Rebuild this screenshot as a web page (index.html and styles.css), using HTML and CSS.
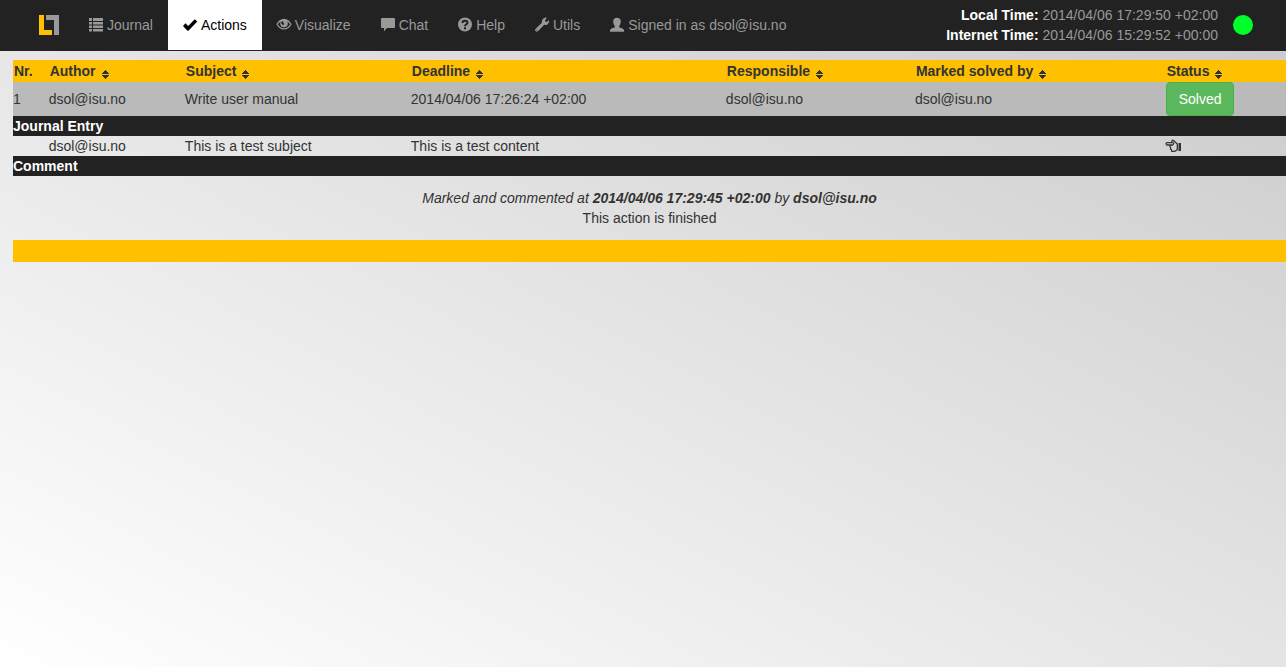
FILE: index.html
```html
<!DOCTYPE html>
<html lang="en">
<head>
<meta charset="utf-8">
<title>Actions</title>
<link rel="stylesheet" href="styles.css">
</head>
<body>
<svg class="defs" aria-hidden="true">
  <symbol id="sort" viewBox="0 0 7 10"><path d="M3 0h1v1h1v1h1v1h1v1H0V3h1V2h1V1h1zM0 5h7v1H6v1H5v1H4v1H3V8H2V7H1V6H0z"/></symbol>
</svg>
<header class="navbar">
  <a class="brand" href="#" aria-label="Home">
    <svg width="20" height="20" viewBox="0 0 20 20"><path fill="#ffc000" d="M0 0h5v15h8v5H0z"/><path fill="#999" d="M7 0h13v20h-5V5H7z"/></svg>
  </a>
  <nav class="menu">
    <a class="item" href="#"><svg class="icon" viewBox="0 0 14 14"><path d="M0 0h3v3H0zM4 0h10v3H4zM0 4h3v2.500H0zM4 4h10v2.500H4zM0 7.500h3V10H0zM4 7.500h10V10H4zM0 11h3v2.500H0zM4 11h10v2.500H4z"/></svg>Journal</a>
    <a class="item active" href="#" aria-current="page"><svg class="icon" viewBox="0 0 14 14"><path d="M0 8l2.500-2.700 2.700 2.600L11.700 1.200 14.300 3.500 5.400 12.700 4.500 12.700z"/></svg>Actions</a>
    <a class="item" href="#"><svg class="icon" viewBox="0 0 14 14"><path fill-rule="evenodd" d="M7 .8c3.300 0 5.800 2.200 7.600 5.400C12.800 9.500 10.300 11.600 7 11.600S1.200 9.500-.6 6.200C1.200 3 3.700.8 7 .8zM3.800 3.400C2.500 4.100 1.600 5 .8 6.200c1.500 2.500 3.600 4 6.200 4s4.700-1.500 6.200-4c-.8-1.200-1.700-2.100-3-2.800.4.700.6 1.300.6 2a3.800 3.800 0 0 1-7.600 0c0-.7.200-1.300.6-2zM5.600 3.100C4.500 3.700 4.100 4.600 4.300 5.600L6.200 7.200 7.200 6z"/></svg>Visualize</a>
    <a class="item" href="#"><svg class="icon" viewBox="0 0 14 14"><path d="M1 0h12q1 0 1 1v8q0 1-1 1H6l-3 3.200V10H1q-1 0-1-1V1q0-1 1-1z"/></svg>Chat</a>
    <a class="item" href="#"><svg class="icon" viewBox="0 0 14 14"><circle cx="7" cy="6.500" r="7"/><path fill="none" stroke="#222" stroke-width="2" d="M4.500 5C4.500 3.400 5.500 2.700 7 2.700s2.500.8 2.500 2C9.500 6.300 7 6.200 7 8.300"/><path fill="#222" d="M6 9.300h2v2H6z"/></svg>Help</a>
    <a class="item" href="#"><svg class="icon" viewBox="0 0 14 14"><path fill-rule="evenodd" d="M12 0L10 2.300l.3 1.300 1.500.3L14 2c.4 2-.3 3.500-1.600 4.400-1 .6-2.200.7-3.200.4l-6 6.200c-.8.8-1.700.8-2.500.3-.8-.8-.7-1.700 0-2.500l6.200-6C6.500 2.600 7.800 0 10.400-.4zM1.500 11.800v.8h.8v-.8z"/></svg>Utils</a>
    <a class="item" href="#"><svg class="icon" viewBox="0 0 14 14"><path d="M3.200 3.200C3.200.9 4.800-.3 7-.3s3.800 1.200 3.800 3.500C10.800 5.200 10 7 9.200 8v1.200l3.800 1.600q1 .5 1 1.500v1.400H0v-1.400Q0 11.300 1 10.800l3.800-1.600V8C4 7 3.200 5.200 3.200 3.200z"/></svg>Signed in as dsol@isu.no</a>
  </nav>
  <div class="clocks">
    <div><b>Local Time:</b> <time>2014/04/06 17:29:50 +02:00</time></div>
    <div><b>Internet Time:</b> <time>2014/04/06 15:29:52 +00:00</time></div>
  </div>
  <span class="status" role="img" aria-label="Online"></span>
</header>
<main>
  <table class="actions">
    <colgroup><col class="c-nr"><col class="c-author"><col class="c-subject"><col class="c-deadline"><col class="c-resp"><col class="c-marked"><col></colgroup>
    <thead>
      <tr>
        <th>Nr.</th>
        <th><button class="sort">Author<svg><use href="#sort"/></svg></button></th>
        <th><button class="sort">Subject<svg><use href="#sort"/></svg></button></th>
        <th><button class="sort">Deadline<svg><use href="#sort"/></svg></button></th>
        <th><button class="sort">Responsible<svg><use href="#sort"/></svg></button></th>
        <th><button class="sort">Marked solved by<svg><use href="#sort"/></svg></button></th>
        <th><button class="sort">Status<svg><use href="#sort"/></svg></button></th>
      </tr>
    </thead>
    <tbody>
      <tr class="action">
        <td>1</td><td>dsol@isu.no</td><td>Write user manual</td><td>2014/04/06 17:26:24 +02:00</td><td>dsol@isu.no</td><td>dsol@isu.no</td>
        <td><button class="solved">Solved</button></td>
      </tr>
      <tr class="section"><th colspan="7">Journal Entry</th></tr>
      <tr>
        <td></td><td>dsol@isu.no</td><td>This is a test subject</td><td colspan="3">This is a test content</td>
        <td><a class="hand" href="#" aria-label="Go to entry"><svg width="15" height="14" viewBox="0 0 15 14"><path fill="none" stroke="#333" stroke-width="1.300" stroke-linejoin="round" d="M6 3.600H1.200C-.2 3.600-.2 6 1.200 6H4.500L3.900 7.500 4.600 8.500 4.500 10 5.500 10.800 5.800 12.300H9L11.300 10.700V5L7.500 1.500C6.500.7 5.400 1.700 6 2.600L7.700 4.400 6.700 6H4.500"/><path fill="#333" d="M12.500 4H15v8h-2.500z"/></svg></a></td>
      </tr>
      <tr class="section"><th colspan="7">Comment</th></tr>
      <tr>
        <td class="comment" colspan="7"><em>Marked and commented at <b>2014/04/06 17:29:45 +02:00</b> by <b>dsol@isu.no</b></em><br>This action is finished</td>
      </tr>
    </tbody>
    <tfoot><tr><td colspan="7"></td></tr></tfoot>
  </table>
</main>
</body>
</html>
```
FILE: styles.css
```css
* { box-sizing: border-box; }

html { min-height: 100%; background: linear-gradient(to top right, #fff, #cacaca); }

body {
  margin: 0;
  color: #333;
  font: 14px/20px "Liberation Sans", Arial, sans-serif;
}

.defs { display: none; }

.navbar {
  display: flex;
  align-items: center;
  background: #222;
  border-bottom: 1px solid #222;
  padding-left: 39px;
  padding-right: 33px;
  color: #999;
}

.brand { display: flex; margin-right: 15px; }
.menu { display: flex; flex: 1; }

.item {
  display: flex;
  align-items: center;
  gap: 4px;
  padding: 15px;
  color: #999;
  text-decoration: none;
  white-space: nowrap;
}

.item.active { background: #fff; color: #000; }

.icon {
  width: 14px;
  height: 14px;
  fill: currentColor;
  overflow: visible;
}

.clocks { padding: 5px 0; text-align: right; white-space: nowrap; }
.clocks b { color: #fff; }

.status {
  width: 20px;
  height: 20px;
  margin-left: 15px;
  border-radius: 50%;
  background: #00ff2a;
}

main { padding: 9px 0 0 13px; }

.actions {
  width: 100%;
  table-layout: fixed;
  border-collapse: collapse;
}

.c-nr { width: 2.8%; }
.c-author { width: 10.7%; }
.c-subject { width: 17.75%; }
.c-deadline { width: 24.75%; }
.c-resp { width: 14.85%; }
.c-marked { width: 19.7%; }

th, td { padding: 0; text-align: left; }

thead th { padding: 1px; background: #ffc000; }

.sort {
  display: flex;
  align-items: center;
  gap: 6px;
  padding: 0;
  border: 0;
  background: none;
  color: inherit;
  font: inherit;
  white-space: nowrap;
  cursor: pointer;
}

.sort svg { width: 7px; height: 10px; margin-top: 7px; fill: #333; }

.action { background: #bababa; }

.solved {
  display: block;
  padding: 6px 12px;
  border: 1px solid #4cae4c;
  border-radius: 4px;
  background: #5cb85c;
  color: #fff;
  font: inherit;
  cursor: pointer;
}

.section { background: #222; color: #fff; }

.hand { display: flex; }
.hand svg { overflow: visible; }

.comment { padding: 12px 0; text-align: center; }

tfoot td { height: 22px; background: #ffc000; }
```
